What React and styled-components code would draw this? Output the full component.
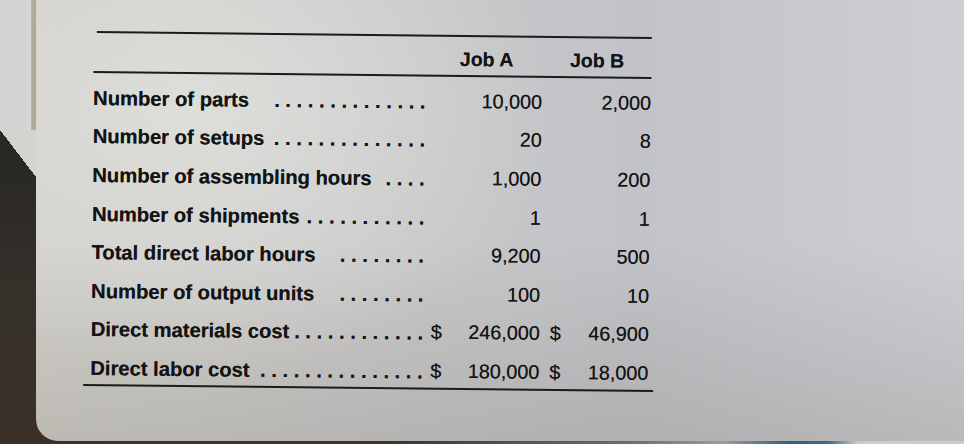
import React from 'react'
import styled, { createGlobalStyle } from 'styled-components';

const Global = createGlobalStyle`
    html, body { margin: 0; padding: 0; }
    body {
        width: 964px;
        height: 444px;
        overflow: hidden;
        background: #2f2821;
        font-family: "Liberation Sans", Arial, sans-serif;
    }
`

const Scene = styled.div`
    width: 964px;
    height: 444px;
    display: flex;
    flex-direction: row;
    background: linear-gradient(90deg, #3a3027 0%, #3c342c 40%, #6a6b70 65%, #9a9ca2 75%, #2f5f7c 82%, #3b6d8a 86%, #c9cbd0 89%, #c9cbd0 100%);
`

const LeftStrip = styled.div`
    width: 36px;
    display: flex;
    flex-direction: column;
    flex-shrink: 0;
`

const BackSheet = styled.div`
    height: 130px;
    background: linear-gradient(90deg, #d2d2d0 0%, #d5d5d3 85%, #b1ad9d 88%, #aaa796 100%);
`

const Fold = styled.div`
    height: 47px;
    background: linear-gradient(to top right, #2b2926 50%, #d3d3d0 50%);
`

const Shadow = styled.div`
    flex: 1;
    background: linear-gradient(180deg, #2b2926 0%, #34302a 40%, #3b3027 100%);
`

const Paper = styled.div`
    flex: 1;
    height: 441px;
    border-bottom-left-radius: 22px;
    padding: 34px 0 0 56px;
    box-sizing: border-box;
    background:
        radial-gradient(ellipse 360px 260px at 160px 110px, rgba(224,224,221,0.85) 0%, rgba(224,224,221,0) 100%),
        linear-gradient(180deg, rgba(0,0,0,0) 55%, rgba(120,115,105,0.24) 100%),
        linear-gradient(90deg, #d2d0ca 0%, #cdcdcb 20%, #c7c7c9 45%, #c2c3c8 65%, #c6c8cd 80%, #cdcfd4 100%);
`

const Table = styled.div`
    width: 558px;
    color: #141414;
    transform: rotate(0.6deg);
    transform-origin: 50% 50%;
    text-shadow: 0 0 0.6px rgba(20,20,20,0.7);
`

const Rule = styled.div`
    height: 2px;
    background: #1b1b1b;
    margin-top: ${({ $lift }) => ($lift ? -$lift : 0)}px;
    margin-left: ${({ $inset }) => $inset || 0}px;
    margin-right: ${({ $outset }) => $outset || 0}px;
`

const Grid = styled.div`
    display: grid;
    grid-template-columns: 337px 14px 98px 21px 88px;
`

const Header = styled(Grid)`
    height: 38px;
    align-items: end;
    padding-bottom: 3px;
    box-sizing: border-box;
`

const HeadCell = styled.div`
    grid-column: ${({ $col }) => $col};
    text-align: center;
    font-size: 19.5px;
    font-weight: 700;
    padding-bottom: 1px;
`

const Body = styled.div`
    padding-top: 5px;
`

const Row = styled(Grid)`
    height: 38.6px;
    align-items: center;
    font-size: 19.8px;
`

const Label = styled.div`
    grid-column: 1;
    display: flex;
    justify-content: space-between;
    align-items: baseline;
    padding-right: 5px;
    padding-top: 2px;
    font-size: 20.2px;
    font-weight: 700;
    white-space: nowrap;
`

const Dots = styled.span`
    letter-spacing: 5.6px;
    font-weight: 700;
    margin-right: -6px;
`

const Dollar = styled.div`
    grid-column: ${({ $col }) => $col};
    text-align: right;
`

const Value = styled.div`
    grid-column: ${({ $col }) => $col};
    text-align: right;
    font-weight: 400;
`

const rows = [
    { label: 'Number of parts', dots: 14, a: '10,000', b: '2,000' },
    { label: 'Number of setups', dots: 14, a: '20', b: '8' },
    { label: 'Number of assembling hours', dots: 4, a: '1,000', b: '200' },
    { label: 'Number of shipments', dots: 11, a: '1', b: '1' },
    { label: 'Total direct labor hours', dots: 8, a: '9,200', b: '500' },
    { label: 'Number of output units', dots: 8, a: '100', b: '10' },
    { label: 'Direct materials cost', dots: 12, a: '246,000', b: '46,900', money: true },
    { label: 'Direct labor cost', dots: 15, a: '180,000', b: '18,000', money: true },
]

const App = () => {
    return (
        <>
            <Global />
            <Scene>
                <LeftStrip>
                    <BackSheet />
                    <Fold />
                    <Shadow />
                </LeftStrip>
                <Paper>
                    <Table>
                        <Rule $inset={3} />
                        <Header>
                            <HeadCell $col="2 / 4">Job A</HeadCell>
                            <HeadCell $col="4 / 6">Job B</HeadCell>
                        </Header>
                        <Rule />
                        <Body>
                            {rows.map((r) => (
                                <Row key={r.label}>
                                    <Label>
                                        <span>{r.label}</span>
                                        <Dots>{'.'.repeat(r.dots)}</Dots>
                                    </Label>
                                    {r.money && <Dollar $col={2}>$</Dollar>}
                                    <Value $col={3}>{r.a}</Value>
                                    {r.money && <Dollar $col={4}>$</Dollar>}
                                    <Value $col={5}>{r.b}</Value>
                                </Row>
                            ))}
                        </Body>
                        <Rule $lift={3} $inset={-7} $outset={-5} />
                    </Table>
                </Paper>
            </Scene>
        </>
    )
}

export default App
